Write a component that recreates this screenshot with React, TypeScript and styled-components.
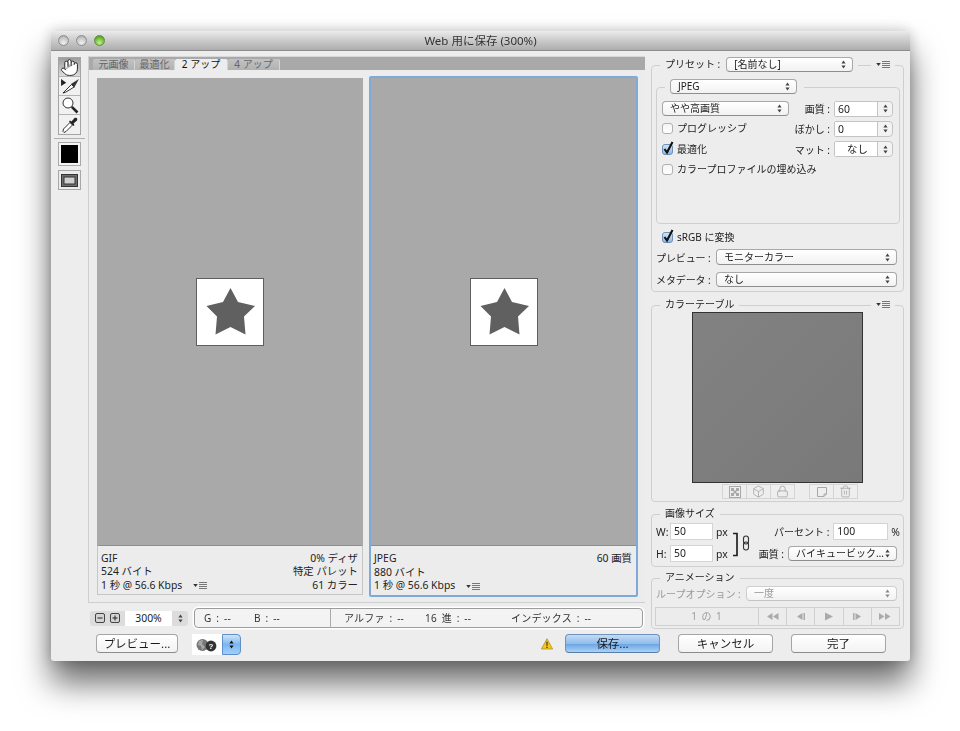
import React from "react";
import styled, { createGlobalStyle } from "styled-components";
import { Hand, Lock, Trash2, Box } from "lucide-react";

const Global = createGlobalStyle`
  html, body { margin: 0; padding: 0; background: #fff; }
  * { box-sizing: border-box; }
  body { font-family: "Noto Sans", "Noto Sans CJK JP", sans-serif; font-size: 10px; color: #222; }
`;

const Page = styled.div`
  width: 960px; height: 731px; overflow: hidden; padding: 31px 50px 0 51px; background: #fff;
`;
const Win = styled.div`
  width: 859px; height: 630px; display: flex; flex-direction: column; background: #ededed;
  border-radius: 4px 4px 3px 3px;
  box-shadow: 0 22px 32px rgba(0,0,0,.58), 0 0 14px rgba(0,0,0,.22);
  filter: blur(.3px);
`;
const TitleBar = styled.div`
  height: 20px; flex: none; display: flex; align-items: center; position: relative; padding-left: 7px; gap: 7px;
  background: linear-gradient(#ececec, #dadada 25%, #adadad);
  border-radius: 4px 4px 0 0; border-bottom: 1px solid #8c8c8c;
`;
const Light = styled.span<{ $green?: boolean }>`
  width: 11px; height: 11px; border-radius: 50%; flex: none;
  background: ${p => p.$green
    ? "radial-gradient(circle at 50% 75%, #c4f08c, #6fb83a 60%, #4e8d2a)"
    : "radial-gradient(circle at 50% 75%, #f0f0f0, #c6c6c6 60%, #9a9a9a)"};
  border: 1px solid ${p => p.$green ? "#5c8f3b" : "#8f8f8f"};
`;
const Title = styled.div`
  position: absolute; left: 0; right: 0; text-align: center; font-size: 11.5px; color: #333; line-height: 20px;
`;
const Main = styled.div`
  display: flex; height: 573px; margin-top: 5px; flex: none;
`;
const ToolCol = styled.div`
  width: 37px; flex: none; display: flex; flex-direction: column; align-items: flex-start; padding-left: 7px;
`;
const ToolGroup = styled.div`
  width: 23px; display: flex; flex-direction: column; border: 1px solid #a4a4a4; margin-top: 1px;
`;
const ToolBtn = styled.div<{ $on?: boolean }>`
  height: 19px; display: flex; align-items: center; justify-content: center;
  background: ${p => p.$on ? "linear-gradient(#9c9c9c, #dcdcdc)" : "#f1f1f1"};
  border-bottom: 1px solid #b4b4b4;
  &:last-child { border-bottom: 0; }
`;
const ToolSep = styled.div`
  width: 31px; height: 1px; background: #b0b0b0; margin: 3px 0 3px -4px;
`;
const SwatchBox = styled.div`
  width: 23px; height: 24px; border: 1px solid #a8a8a8; background: #f4f4f4; padding: 2px; display: flex;
  & > i { flex: 1; background: #000; }
`;
const ToggleBox = styled.div`
  width: 23px; height: 20px; margin-top: 4px; border: 1px solid #a8a8a8; background: #ececec;
  display: flex; align-items: center; justify-content: center;
`;
const Center = styled.div`
  width: 557px; flex: none; display: flex; flex-direction: column;
`;
const Panel = styled.div`
  height: 547px; flex: none; border-left: 1px solid #cfcfcf; border-bottom: 1px solid #cfcfcf; background: #ececec;
  display: flex; flex-direction: column;
`;
const TabStrip = styled.div`
  height: 14px; flex: none; background: #a9a9a9; display: flex; align-items: flex-end; padding-left: 4px; border-top: 1px solid #d8d8d8;
`;
const Tab = styled.div<{ $w: number; $on?: boolean }>`
  width: ${p => p.$w}px; height: 11px; font-size: 10px; line-height: 11px; text-align: center;
  border-radius: 2px 2px 0 0;
  color: ${p => p.$on ? "#111" : "#666"};
  background: ${p => p.$on ? "#ededed" : "linear-gradient(#c2c2c2, #b2b2b2)"};
  border-right: 1px solid #d4d4d4;
`;
const Panes = styled.div`
  display: flex; gap: 4px; padding: 6px 0 0 6px;
`;
const Pane = styled.div<{ $active?: boolean }>`
  width: ${p => p.$active ? 269 : 270}px; height: 521px; border: 2px solid ${p => p.$active ? "#7fa9d9" : "transparent"};
  border-radius: 2px; display: flex; flex-direction: column;
`;
const Preview = styled.div`
  height: 467px; flex: none; background: #a9a9a9; display: flex; align-items: center; justify-content: center;
`;
const Card = styled.div`
  width: 68px; height: 68px; background: #fff; border: 1px solid #5e5e5e; flex: none;
  & svg { display: block; margin: -1px; }
`;
const Info = styled.div<{ $boxed?: boolean }>`
  flex: 1; display: grid; grid-template-columns: 1fr auto; grid-auto-rows: 13.5px; align-content: center;
  padding: 4px 4px 0 3px; line-height: 13.5px; font-size: 10.4px; color: #222; border-top: 1px solid #8e8e8e;
  ${p => p.$boxed ? "border-left: 1px solid #c6c6c6; border-right: 1px solid #c6c6c6; border-bottom: 1px solid #c6c6c6;" : ""}
`;
const Right = styled.div`
  text-align: right;
`;
const MenuMark = styled.span`
  display: inline-flex; align-items: center; gap: 1px; vertical-align: middle;
`;
const InfoMenu = styled.span`
  margin-left: 11px;
`;
const StatusRow = styled.div`
  display: flex; height: 20px; margin-top: 5px; padding-left: 2px; gap: 6px; align-items: center;
`;
const ZoomCtl = styled.div`
  width: 98px; height: 15px; display: flex; align-items: center; padding-left: 5px; background: #dcdcdc; border-radius: 3px; flex: none;
`;
const ZoomBtn = styled.svg`
  width: 10px; height: 10px; margin-right: 5px; flex: none; display: block;
`;
const ZoomVal = styled.div`
  width: 47px; height: 15px; background: #fff; text-align: center; font-size: 10.4px; line-height: 15px;
`;
const ZoomSpin = styled.div`
  flex: 1; display: flex; align-items: center; justify-content: center;
`;
const Readout = styled.div`
  width: 449px; height: 20px; display: flex; align-items: center; border: 1px solid #9c9c9c; border-radius: 4px; background: #f3f3f3;
  box-shadow: 0 0 0 1.5px #fff; padding-left: 9px; font-size: 10px; color: #333; flex: none;
  letter-spacing: .2px; word-spacing: 2px;
`;
const ReadItem = styled.span<{ $w: number; $div?: boolean }>`
  width: ${p => p.$w}px; flex: none; line-height: 19px; white-space: nowrap;
  ${p => p.$div ? "border-left: 1px solid #aaa; padding-left: 13px;" : ""}
`;
const Side = styled.div`
  width: 253px; margin-left: 6px; flex: none; padding-top: 9px; display: flex; flex-direction: column;
`;
const Group = styled.div<{ $h: number; $mt?: number; $dim?: boolean }>`
  height: ${p => p.$h}px; margin-top: ${p => p.$mt ?? 0}px; border: 1px solid #cfcfcf; border-radius: 4px; flex: none;
  color: ${p => p.$dim ? "#999" : "inherit"};
`;
const Head = styled.div`
  height: 15px; margin-top: -9px; display: flex; align-items: center; justify-content: space-between; padding: 0 8px 0 8px;
`;
const HeadPart = styled.div`
  display: flex; align-items: center; gap: 6px; background: #ededed; padding: 0 5px; height: 15px; line-height: 15px; font-size: 10px; color: #222;
`;
const Select = styled.div<{ $w: number; $h?: number; $dim?: boolean }>`
  width: ${p => p.$w}px; height: ${p => p.$h ?? 15}px; flex: none; display: flex; align-items: center; justify-content: space-between;
  padding: 0 6px 0 7px; border: 1px solid ${p => p.$dim ? "#cfcfcf" : "#a8a8a8"}; border-bottom-color: ${p => p.$dim ? "#c4c4c4" : "#8e8e8e"};
  border-radius: 4px; background: linear-gradient(#fff, #f2f2f2); font-size: 10px; line-height: 13px;
  color: ${p => p.$dim ? "#999" : "#222"}; white-space: nowrap;
`;
const SizeSelect = styled(Select)`
  margin-right: 3px;
`;
const Inner = styled.div`
  height: 137px; margin: 15px 3px 0 4px; border: 1px solid #cfcfcf; border-radius: 4px; flex: none;
`;
const InnerHead = styled.div`
  margin: -9px 0 0 8px; width: fit-content; padding: 0 7px 0 5px; background: #ededed; height: 15px;
`;
const Rows = styled.div`
  display: flex; flex-direction: column; gap: 5.4px; padding: 7px 6px 0 5px;
`;
const Row = styled.div`
  display: flex; align-items: center; justify-content: space-between; height: 15px;
`;
const CheckWrap = styled.label`
  display: flex; align-items: center; gap: 4px; font-size: 10px; line-height: 15px;
`;
const CheckBox = styled.span<{ $on?: boolean }>`
  width: 11px; height: 11px; flex: none; border-radius: 3px; position: relative;
  border: 1px solid ${p => p.$on ? "#6d8fb6" : "#b0b0b0"};
  background: ${p => p.$on ? "linear-gradient(#cfe3f7, #8fbbe6)" : "linear-gradient(#f4f4f4, #fff)"};
  & svg { position: absolute; left: 0; top: -4px; }
`;
const Field = styled.div`
  display: flex; align-items: center;
`;
const FieldLabel = styled.span`
  font-size: 10px; margin-right: 4px; white-space: nowrap;
`;
const DimLabel = styled(FieldLabel)`
  width: 86px; color: #999;
`;
const NumField = styled.div<{ $center?: boolean }>`
  width: 59px; height: 16px; display: flex; border: 1px solid #c4c4c4; border-radius: 2px 4px 4px 2px; background: #f3f3f3; flex: none;
  & > span { flex: 1; background: #fff; font-size: 10.4px; line-height: 14px; padding-left: 3px; border-right: 1px solid #c4c4c4;
    text-align: ${p => p.$center ? "center" : "left"}; }
  & > i { width: 14px; display: flex; align-items: center; justify-content: center; }
`;
const SideRow = styled.div<{ $mt: number }>`
  display: flex; align-items: center; margin: ${p => p.$mt}px 0 0 4px; font-size: 10px; white-space: nowrap;
`;
const SideLabel = styled.span`
  width: 60px; flex: none; font-size: 10px; letter-spacing: -.1px;
`;
const SrgbRow = styled.div`
  margin: 7px 0 0 10px; height: 12px; display: flex; align-items: center;
`;
const ColorTable = styled.div`
  width: 171px; height: 171px; margin: 0 auto; border: 1px solid #333; background: linear-gradient(135deg, #828282, #797979);
`;
const IconRow = styled.div`
  display: flex; padding: 1px 0 0 71px;
`;
const IconBtn = styled.div<{ $gap?: boolean }>`
  width: 25px; height: 15px; display: flex; align-items: center; justify-content: center; color: #a8a8a8;
  border: 1px solid #d4d4d4; margin-left: ${p => p.$gap ? 14 : -1}px; background: #eee;
`;
const SizeBody = styled.div`
  display: flex; padding: 2px 3px 0 4px;
`;
const SizeCol = styled.div`
  display: flex; flex-direction: column; gap: 5px;
`;
const SizeRow = styled.div`
  display: flex; align-items: center; height: 17px; font-size: 10.4px;
`;
const AxisLabel = styled.span`
  width: 14px; flex: none; text-align: left;
`;
const TextInput = styled.div<{ $w: number }>`
  width: ${p => p.$w}px; height: 17px; flex: none; background: #fff; border: 1px solid #d4d4d4; line-height: 15px; padding-left: 3px; font-size: 10.4px;
`;
const Unit = styled.span`
  margin-left: 3px; font-size: 10.4px;
`;
const LinkArt = styled.div`
  width: 20px; display: flex; align-items: center; margin-left: 5px; flex: none;
`;
const SizeRight = styled(SizeCol)`
  margin-left: auto; align-items: flex-end;
`;
const Transport = styled.div`
  display: flex; height: 19px; margin: 6px 3px 0 3px; border: 1px solid #d0d0d0; background: #ececec;
`;
const TransportCount = styled.div`
  width: 102px; text-align: center; color: #9c9c9c; font-size: 10px; line-height: 17px; letter-spacing: 1px;
`;
const TransportBtn = styled.div`
  flex: 1; border-left: 1px solid #d0d0d0; display: flex; align-items: center; justify-content: center;
`;
const Footer = styled.div`
  height: 32px; flex: none; padding: 5px 24px 0 45px; display: flex; align-items: flex-start;
`;
const PushBtn = styled.div<{ $w: number; $primary?: boolean }>`
  width: ${p => p.$w}px; height: 19px; flex: none; border-radius: 4px; text-align: center; font-size: 11.5px; line-height: 17px; color: #1a1a1a;
  border: 1px solid ${p => p.$primary ? "#6f93bd" : "#a6a6a6"}; border-bottom-color: ${p => p.$primary ? "#5a7da8" : "#8c8c8c"};
  background: ${p => p.$primary ? "linear-gradient(#c4dcf5, #8fbdec 50%, #6ea6e4 55%, #a9d2f7)" : "linear-gradient(#fff, #f3f3f3)"};
`;
const PickerWrap = styled.div`
  margin-left: 14px; width: 49px; height: 21px; display: flex; flex: none;
`;
const PickerArt = styled.div`
  width: 30px; background: #fff; display: flex; align-items: center; justify-content: center;
`;
const PickerStep = styled.div`
  flex: 1; border: 1px solid #5f8fc6; border-radius: 0 4px 4px 0; background: linear-gradient(#cfe5fa, #7cb6f0 50%, #9fd0fa);
  display: flex; align-items: center; justify-content: center;
`;
const Warn = styled.div`
  margin: 4px 12px 0 auto; width: 12px; height: 12px; flex: none; & svg { display: block; }
`;
const Gap = styled.div`
  width: 18px; flex: none;
`;

const Updown = ({ c = "#444" }: { c?: string }) => (
  <svg width="5" height="9" viewBox="0 0 5 9" style={{ flex: "none" }}>
    <path d="M2.5 0.5 L4.6 3.5 H0.4 Z M2.5 8.5 L4.6 5.5 H0.4 Z" fill={c} />
  </svg>
);
const Menu = () => (
  <MenuMark>
    <svg width="5" height="3" viewBox="0 0 6 4"><path d="M0 0 H6 L3 4 Z" fill="#333" /></svg>
    <svg width="8" height="7" viewBox="0 0 8 7"><path d="M0 .5 H8 M0 2.5 H8 M0 4.5 H8 M0 6.5 H8" stroke="#777" strokeWidth="1" /></svg>
  </MenuMark>
);
const Check = ({ label, on }: { label?: string; on?: boolean }) => (
  <CheckWrap>
    <CheckBox $on={on}>
      {on && (
        <svg width="11" height="14" viewBox="0 0 11 14">
          <path d="M1.5 8 L4 11.5 L9.5 1" fill="none" stroke="#111" strokeWidth="2.1" />
        </svg>
      )}
    </CheckBox>
    {label}
  </CheckWrap>
);
const Star = () => (
  <svg width="68" height="68" viewBox="0 0 68 68">
    <path d="M34.5 10 L42 24 L59 28 L48 38.5 L49.5 56.5 L34.5 49 L19.5 56.5 L21 38.5 L10.5 28 L27 24 Z" fill="#606060" />
  </svg>
);
const MiniSpin = () => <i><Updown /></i>;
const Tri = ({ d }: { d: string }) => (
  <svg width="14" height="9" viewBox="0 0 14 9"><path d={d} fill="#aaa" /></svg>
);

export default function App() {
  return (
    <>
      <Global />
      <Page>
        <Win>
          <TitleBar>
            <Light /><Light /><Light $green />
            <Title>Web 用に保存 (300%)</Title>
          </TitleBar>
          <Main>
            <ToolCol>
              <ToolGroup>
                <ToolBtn $on><Hand size={19} strokeWidth={1.2} color="#222" fill="#fff" /></ToolBtn>
                <ToolBtn>
                  <svg width="20" height="16" viewBox="0 0 21 17">
                    <path d="M1 1 L6.5 5 L1 8.5 Z" fill="#222" />
                    <path d="M3 16 L12 7 L15 9.5 L6 15 Z" fill="#fff" stroke="#222" strokeWidth="1" />
                    <path d="M11.5 6.5 L20 1 L15 10 Z" fill="#333" />
                  </svg>
                </ToolBtn>
                <ToolBtn>
                  <svg width="18" height="18" viewBox="0 0 18 18">
                    <circle cx="7" cy="7" r="5" fill="#fff" stroke="#333" strokeWidth="1" />
                    <path d="M10.8 10.8 L16.5 16.5" stroke="#222" strokeWidth="2.6" />
                  </svg>
                </ToolBtn>
                <ToolBtn>
                  <svg width="18" height="18" viewBox="0 0 18 18">
                    <path d="M3 16.5 L2 15.5 L2.5 13 L9 6.5 L11.5 9 L5 15.5 Z" fill="#fff" stroke="#333" strokeWidth="1" />
                    <path d="M8 5.5 L12.5 10 L13.5 9 L12.5 7.5 L16 4.5 C17 2.5 15.5 1 13.5 2 L10.5 5.5 L9 4.5 Z" fill="#222" />
                  </svg>
                </ToolBtn>
              </ToolGroup>
              <ToolSep />
              <SwatchBox><i /></SwatchBox>
              <ToggleBox>
                <svg width="17" height="13" viewBox="0 0 17 13">
                  <rect x="0.5" y="0.5" width="16" height="12" fill="#6e6e6e" stroke="#333" />
                  <rect x="3" y="3" width="11" height="7" fill="#d0d0d0" stroke="#333" />
                </svg>
              </ToggleBox>
            </ToolCol>
            <Center>
              <Panel>
                <TabStrip>
                  <Tab $w={42}>元画像</Tab>
                  <Tab $w={40}>最適化</Tab>
                  <Tab $w={53} $on>2 アップ</Tab>
                  <Tab $w={52}>4 アップ</Tab>
                </TabStrip>
                <Panes>
                  <Pane>
                    <Preview><Card><Star /></Card></Preview>
                    <Info $boxed>
                      <span>GIF</span><Right>0% ディザ</Right>
                      <span>524 バイト</span><Right>特定 パレット</Right>
                      <span>1 秒 @ 56.6 Kbps<InfoMenu><Menu /></InfoMenu></span><Right>61 カラー</Right>
                    </Info>
                  </Pane>
                  <Pane $active>
                    <Preview><Card><Star /></Card></Preview>
                    <Info>
                      <span>JPEG</span><Right>60 画質</Right>
                      <span>880 バイト</span><Right></Right>
                      <span>1 秒 @ 56.6 Kbps<InfoMenu><Menu /></InfoMenu></span><Right></Right>
                    </Info>
                  </Pane>
                </Panes>
              </Panel>
              <StatusRow>
                <ZoomCtl>
                  <ZoomBtn viewBox="0 0 10 10">
                    <rect x=".5" y=".5" width="9" height="9" rx="1.5" fill="#d4d4d4" stroke="#444" />
                    <path d="M2.5 5 H7.5" stroke="#222" />
                  </ZoomBtn>
                  <ZoomBtn viewBox="0 0 10 10">
                    <rect x=".5" y=".5" width="9" height="9" rx="1.5" fill="#d4d4d4" stroke="#444" />
                    <path d="M2.5 5 H7.5 M5 2.5 V7.5" stroke="#222" />
                  </ZoomBtn>
                  <ZoomVal>300%</ZoomVal>
                  <ZoomSpin><Updown /></ZoomSpin>
                </ZoomCtl>
                <Readout>
                  <ReadItem $w={50}>G : --</ReadItem>
                  <ReadItem $w={76}>B : --</ReadItem>
                  <ReadItem $w={95} $div>アルファ : --</ReadItem>
                  <ReadItem $w={86}>16 進 : --</ReadItem>
                  <ReadItem $w={100}>インデックス : --</ReadItem>
                </Readout>
              </StatusRow>
            </Center>
            <Side>
              <Group $h={227}>
                <Head>
                  <HeadPart>
                    プリセット :
                    <Select $w={127}>[名前なし]<Updown /></Select>
                  </HeadPart>
                  <HeadPart><Menu /></HeadPart>
                </Head>
                <Inner>
                  <InnerHead><Select $w={127}>JPEG<Updown /></Select></InnerHead>
                  <Rows>
                    <Row>
                      <Select $w={127}>やや高画質<Updown /></Select>
                      <Field><FieldLabel>画質 :</FieldLabel><NumField><span>60</span><MiniSpin /></NumField></Field>
                    </Row>
                    <Row>
                      <Check label="プログレッシブ" />
                      <Field><FieldLabel>ぼかし :</FieldLabel><NumField><span>0</span><MiniSpin /></NumField></Field>
                    </Row>
                    <Row>
                      <Check label="最適化" on />
                      <Field><FieldLabel>マット :</FieldLabel><NumField $center><span>なし</span><MiniSpin /></NumField></Field>
                    </Row>
                    <Row>
                      <Check label="カラープロファイルの埋め込み" />
                    </Row>
                  </Rows>
                </Inner>
                <SrgbRow><Check label="sRGB に変換" on /></SrgbRow>
                <SideRow $mt={6}><SideLabel>プレビュー :</SideLabel><Select $w={181} $h={16}>モニターカラー<Updown /></Select></SideRow>
                <SideRow $mt={7}><SideLabel>メタデータ :</SideLabel><Select $w={181}>なし<Updown /></Select></SideRow>
              </Group>
              <Group $h={197} $mt={13}>
                <Head>
                  <HeadPart>カラーテーブル</HeadPart>
                  <HeadPart><Menu /></HeadPart>
                </Head>
                <ColorTable />
                <IconRow>
                  <IconBtn>
                    <svg width="12" height="12" viewBox="0 0 12 12">
                      <rect x=".5" y=".5" width="11" height="11" fill="none" stroke="#a8a8a8" />
                      <path d="M2 2h3v3H2z M7 2h3v3H7z M4.5 4.5h3v3h-3z M2 7h3v3H2z M7 7h3v3H7z" fill="#a8a8a8" />
                    </svg>
                  </IconBtn>
                  <IconBtn><Box size={13} strokeWidth={1.5} /></IconBtn>
                  <IconBtn><Lock size={13} strokeWidth={1.6} /></IconBtn>
                  <IconBtn $gap>
                    <svg width="12" height="12" viewBox="0 0 12 12">
                      <path d="M1.5 1.5 H10.5 V8 L8 10.5 H1.5 Z M8 10.5 V8 H10.5" fill="none" stroke="#a8a8a8" />
                    </svg>
                  </IconBtn>
                  <IconBtn><Trash2 size={13} strokeWidth={1.5} /></IconBtn>
                </IconRow>
              </Group>
              <Group $h={53} $mt={12}>
                <Head><HeadPart>画像サイズ</HeadPart></Head>
                <SizeBody>
                  <SizeCol>
                    <SizeRow><AxisLabel>W:</AxisLabel><TextInput $w={43}>50</TextInput><Unit>px</Unit></SizeRow>
                    <SizeRow><AxisLabel>H:</AxisLabel><TextInput $w={43}>50</TextInput><Unit>px</Unit></SizeRow>
                  </SizeCol>
                  <LinkArt>
                    <svg width="20" height="28" viewBox="0 0 20 28">
                      <path d="M0 4.5 H4 V26.5 H0" fill="none" stroke="#222" strokeWidth="1.7" />
                      <rect x="10.5" y="7" width="5" height="8" rx="2.5" fill="none" stroke="#333" strokeWidth="1.1" />
                      <rect x="10.5" y="13" width="5" height="8" rx="2.5" fill="none" stroke="#333" strokeWidth="1.1" />
                    </svg>
                  </LinkArt>
                  <SizeRight>
                    <SizeRow><FieldLabel>パーセント :</FieldLabel><TextInput $w={55}>100</TextInput><Unit>%</Unit></SizeRow>
                    <SizeRow><FieldLabel>画質 :</FieldLabel><SizeSelect $w={109}>バイキュービック…<Updown /></SizeSelect></SizeRow>
                  </SizeRight>
                </SizeBody>
              </Group>
              <Group $h={51} $mt={11} $dim>
                <Head><HeadPart>アニメーション</HeadPart></Head>
                <SideRow $mt={1}>
                  <DimLabel>ループオプション :</DimLabel>
                  <Select $w={151} $dim>一度<Updown c="#888" /></Select>
                </SideRow>
                <Transport>
                  <TransportCount>1 の 1</TransportCount>
                  <TransportBtn><Tri d="M1 4.5 L6.5 1 V8 Z M7 4.5 L12.5 1 V8 Z" /></TransportBtn>
                  <TransportBtn><Tri d="M3 4.5 L8.5 1 V8 Z M9.5 1 H11 V8 H9.5 Z" /></TransportBtn>
                  <TransportBtn><Tri d="M3 .5 L11 4.5 L3 8.5 Z" /></TransportBtn>
                  <TransportBtn><Tri d="M3 1 H4.5 V8 H3 Z M5.5 1 L11 4.5 L5.5 8 Z" /></TransportBtn>
                  <TransportBtn><Tri d="M1 1 L6.5 4.5 L1 8 Z M7 1 L12.5 4.5 L7 8 Z" /></TransportBtn>
                </Transport>
              </Group>
            </Side>
          </Main>
          <Footer>
            <PushBtn $w={82}>プレビュー...</PushBtn>
            <PickerWrap>
              <PickerArt>
                <svg width="22" height="14" viewBox="0 0 22 14">
                  <circle cx="6.5" cy="7" r="6" fill="#777" />
                  <path d="M3 3 L7 2 L6 6 L9 9 L6 12 L5 8 L2 7 Z" fill="#a8a8a8" />
                  <circle cx="15" cy="8" r="5.4" fill="#333" />
                  <text x="15" y="11" fontSize="8" fontWeight="700" fill="#fff" textAnchor="middle" fontFamily="Liberation Sans">?</text>
                </svg>
              </PickerArt>
              <PickerStep><Updown c="#111" /></PickerStep>
            </PickerWrap>
            <Warn>
              <svg width="12" height="12" viewBox="0 0 12 12">
                <path d="M6 .7 L11.6 11 H.4 Z" fill="#f2c61f" stroke="#a88a1a" strokeWidth=".7" />
                <path d="M5.4 3.8 H6.6 L6.4 7.9 H5.6 Z M5.4 8.7 H6.6 V9.9 H5.4 Z" fill="#222" />
              </svg>
            </Warn>
            <PushBtn $w={95} $primary>保存...</PushBtn>
            <Gap />
            <PushBtn $w={95}>キャンセル</PushBtn>
            <Gap />
            <PushBtn $w={95}>完了</PushBtn>
          </Footer>
        </Win>
      </Page>
    </>
  );
}
